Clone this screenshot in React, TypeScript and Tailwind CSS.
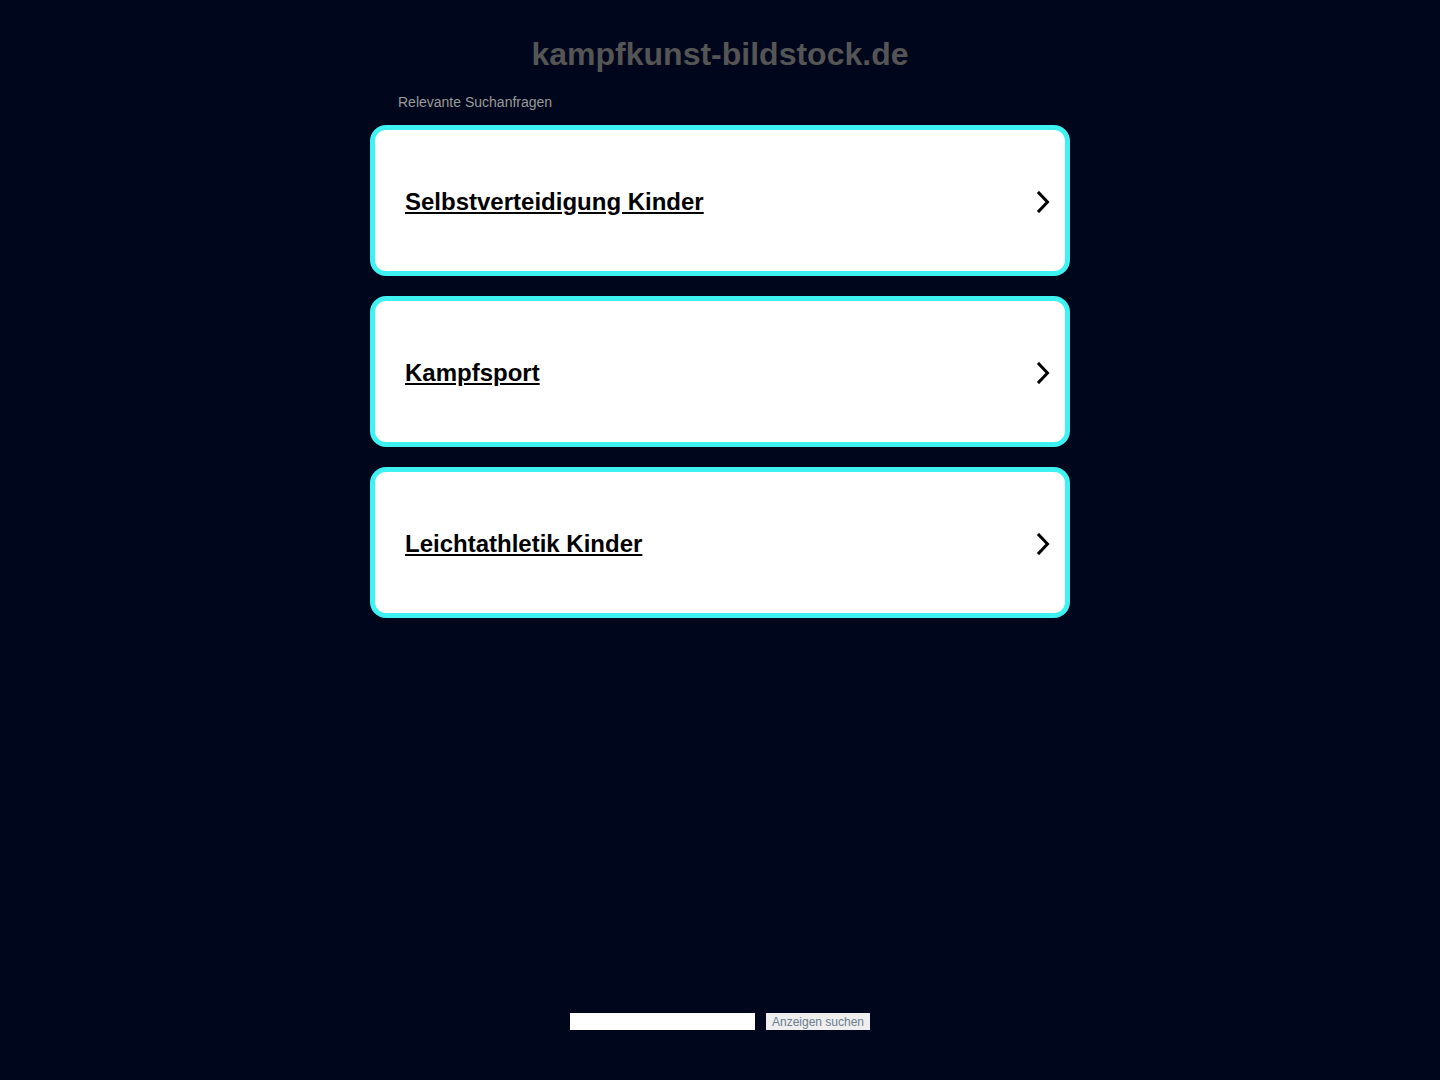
import React from "react";

const items = ["Selbstverteidigung Kinder", "Kampfsport", "Leichtathletik Kinder"];

function Chevron() {
  return (
    <svg width="14" height="22" viewBox="0 0 14 22" fill="none" className="shrink-0">
      <path d="M3 2 L11.5 11 L3 20" stroke="#000" strokeWidth="3" strokeLinecap="square" strokeLinejoin="miter" />
    </svg>
  );
}

export default function App() {
  return (
    <div className="min-h-screen h-[1080px] bg-[#00071c] flex flex-col items-center" style={{ fontFamily: '"Liberation Sans", Arial, sans-serif' }}>
      <div className="w-[700px] flex flex-col">
        <h1 className="text-center font-bold text-[32px] leading-[36px] text-[#555555] pt-[36px]">kampfkunst-bildstock.de</h1>
        <div className="pl-[28px] pt-[22px] text-[14px] leading-[16px] text-[#999999]">Relevante Suchanfragen</div>
        <div className="flex flex-col gap-[20px] mt-[15px]">
          {items.map((t) => (
            <a key={t} href="#" className="h-[151px] rounded-[16px] border-[5px] border-[#3ef2f2] bg-white flex items-center justify-between pl-[30px] pr-[15px] pt-[2px]">
              <span className="text-[24px] font-bold underline text-black leading-[28px]">{t}</span>
              <Chevron />
            </a>
          ))}
        </div>
      </div>
      <div className="mt-auto mb-[50px] flex items-center gap-[11px]">
        <input className="w-[185px] h-[17px] bg-white border-0 outline-none" />
        <button className="h-[17px] w-[104px] bg-[#eeeeee] text-[12px] leading-[19px] text-[#6b7d8f]">Anzeigen suchen</button>
      </div>
    </div>
  );
}
